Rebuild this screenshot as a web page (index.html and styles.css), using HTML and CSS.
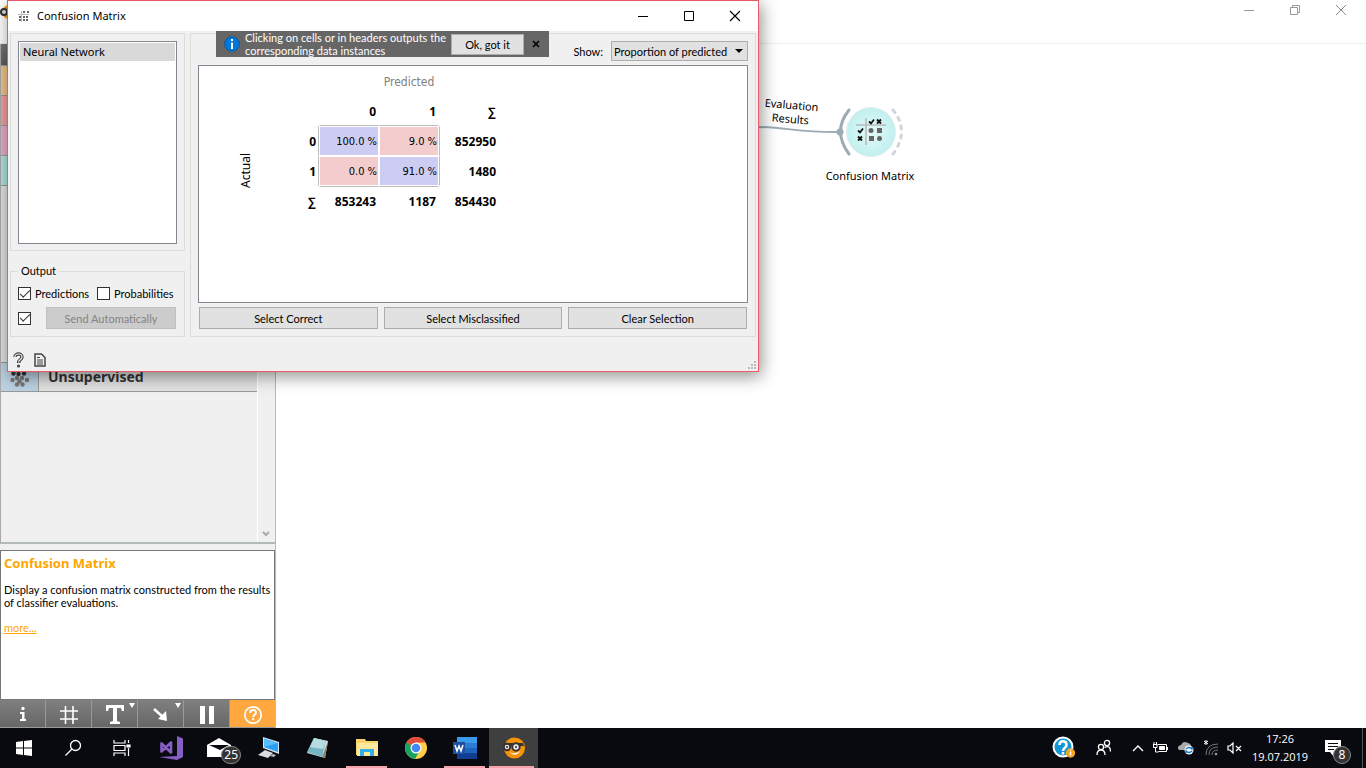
FILE: index.html
```html
<!DOCTYPE html>
<html lang="en">
<head>
<meta charset="utf-8">
<title>Confusion Matrix</title>
<link rel="stylesheet" href="styles.css">
</head>
<body>
<main class="app">
  <header class="app-bar">
    <svg class="app-logo" width="16" height="16" viewBox="0 0 16 16"><circle cx="9" cy="8" r="7" fill="#f59a14"/><circle cx="4" cy="8" r="3" fill="#ddd" stroke="#333" stroke-width="2"/></svg>
    <div class="app-controls">
      <button aria-label="Minimize"><svg width="12" height="12"><path d="M1 6.500H11" stroke="#999"/></svg></button>
      <button aria-label="Restore"><svg width="12" height="12" fill="none" stroke="#999"><path d="M1.500 3.500h7v7h-7zM3.500 3V1.500h7v7H9"/></svg></button>
      <button aria-label="Close"><svg width="12" height="12"><path d="M1 1L11 11M11 1L1 11" stroke="#888"/></svg></button>
    </div>
  </header>
  <div class="workspace">
    <aside class="sidebar">
      <div class="toolbox">
        <div class="categories">
          <div class="toolbox-head"></div>
          <div class="category data"></div>
          <div class="category visualize"></div>
          <div class="category model"></div>
          <div class="category evaluate"></div>
          <div class="category-body"></div>
          <button class="unsupervised"><span class="unsup-icon"><svg width="20" height="20" viewBox="0 0 20 20"><g fill="#333"><circle cx="6" cy="3" r="2"/><circle cx="11" cy="2" r="2"/><circle cx="16" cy="3" r="2"/><circle cx="3.500" cy="6.500" r="2.200"/><circle cx="8.500" cy="7" r="2.200"/><circle cx="14" cy="6.500" r="2.200"/></g><g fill="#777"><circle cx="7" cy="11" r="2.200"/><circle cx="12" cy="11" r="2.200"/><circle cx="2.500" cy="13" r="2.200"/><circle cx="17" cy="13" r="2.200"/><circle cx="9.500" cy="14.500" r="2.200"/><circle cx="7" cy="17.500" r="2.200"/><circle cx="12.500" cy="17.500" r="2.200"/></g></svg></span><span>Unsupervised</span></button>
          <div class="category-rest"></div>
        </div>
        <div class="scroll"><svg width="8" height="6"><path d="M1 1l3 3 3-3" fill="none" stroke="#aaa" stroke-width="2"/></svg></div>
      </div>
      <section class="help">
        <h2>Confusion Matrix</h2>
        <p>Display a confusion matrix constructed from the results of classifier evaluations.</p>
        <a href="#more">more...</a>
      </section>
      <nav class="tools">
        <button aria-label="Info"><svg width="20" height="24" viewBox="0 0 20 24" fill="#fff"><circle cx="10" cy="6.500" r="1.700"/><path d="M7 10h4.500v7H13v2H7v-2h2v-5H7z"/></svg></button>
        <button aria-label="Grid"><svg width="20" height="24" viewBox="0 0 20 24"><path d="M6.500 4v18M14 4v18M1 9h18M1 17h18" stroke="#fff" stroke-width="1.600"/></svg></button>
        <button aria-label="Text" class="has-menu"><svg width="20" height="24" viewBox="0 0 20 24" fill="#fff"><path d="M1 3h18v6h-2l-1-3h-4v13l3 1v2H5v-2l3-1V6H4L3 9H1z"/></svg></button>
        <button aria-label="Arrow" class="has-menu"><svg width="20" height="24" viewBox="0 0 20 24"><path d="M3 7l9 8" stroke="#fff" stroke-width="2.500"/><path d="M16 19l-1-10-8 8z" fill="#fff"/></svg></button>
        <button aria-label="Pause"><svg width="20" height="24" viewBox="0 0 20 24"><path d="M3 4h5v18H3zM12 4h5v18h-5z" fill="#fff"/></svg></button>
        <button aria-label="Help" class="active"><svg width="20" height="24" viewBox="0 0 20 24" fill="none" stroke="#fff" stroke-width="1.700"><circle cx="10" cy="13" r="8.200"/><path d="M7.200 11c0-4 5.800-3.800 5.800-.5 0 2-2.800 2-2.800 4.500M10.200 16v2" stroke-width="2"/></svg></button>
      </nav>
    </aside>
    <section class="canvas">
      <svg class="link" width="90" height="20" viewBox="0 0 90 20"><path d="M0 6C30 6 45 12 85 11" fill="none" stroke="#9cacb4" stroke-width="2"/></svg>
      <div class="link-label">Evaluation<br>Results</div>
      <div class="node">
        <svg width="70" height="56" viewBox="0 0 70 56">
          <defs><radialGradient id="disc"><stop offset="0" stop-color="#e2faf9"/><stop offset="1" stop-color="#c0f0ef"/></radialGradient></defs>
          <circle cx="36" cy="29" r="24.500" fill="url(#disc)" stroke="#e6eded"/>
          <path d="M14 7Q-3 28 14 51" fill="none" stroke="#9cacb4" stroke-width="3" stroke-linecap="round"/>
          <circle cx="5" cy="29" r="3.500" fill="#9cacb4"/>
          <path d="M58 7Q75 28 58 51" fill="none" stroke="#cdd6da" stroke-width="3" stroke-linecap="round" stroke-dasharray="3 6"/>
          <path d="M31 15v27M21 22h30" stroke="#bbb" stroke-width="1.600"/>
          <path d="M34 18.500l2 2 3-4M23 27.500l2 2 3-4M42 16.500l4 4M46 16.500l-4 4M23 33.500l4 4M27 33.500l-4 4" fill="none" stroke="#111" stroke-width="1.800"/>
          <g fill="#666"><circle cx="36" cy="27.500" r="2.500"/><path d="M42 25h5v5h-5zM34 33h5v5h-5z"/><circle cx="44.500" cy="35.500" r="2.500"/></g>
        </svg>
        <div>Confusion Matrix</div>
      </div>
    </section>
  </div>
</main>

<section class="dialog" role="dialog" aria-label="Confusion Matrix">
  <header class="title-bar">
    <svg width="13" height="13" viewBox="0 0 13 13"><path d="M4.500 1v11M1 4.500h11" stroke="#bbb"/><path d="M2 7h2M2 10h2M6 7h2M9 7h2M6 10h2M9 10h2M6 2h2M10 2h2" stroke="#666" stroke-width="2"/></svg>
    <h1>Confusion Matrix</h1>
    <div class="dialog-controls">
      <button aria-label="Minimize"><svg width="12" height="12"><path d="M1 6.500H11" stroke="#000"/></svg></button>
      <button aria-label="Maximize"><svg width="12" height="12"><path d="M1.500 1.500h9v9h-9z" fill="none" stroke="#000"/></svg></button>
      <button aria-label="Close"><svg width="12" height="12"><path d="M1 1L11 11M11 1L1 11" stroke="#000" stroke-width="1.200"/></svg></button>
    </div>
  </header>
  <div class="hint">
    <svg width="16" height="16" viewBox="0 0 16 16"><circle cx="8" cy="8" r="7.500" fill="#0078d7" stroke="#1c5a91"/><path d="M8 6.500V13M8 3v2" stroke="#fff" stroke-width="2"/></svg>
    <p>Clicking on cells or in headers outputs the<br>corresponding data instances</p>
    <button class="button">Ok, got it</button>
    <button class="dismiss" aria-label="Dismiss"><svg width="8" height="8"><path d="M1 1l6 6M7 1L1 7" stroke="#000" stroke-width="1.600"/></svg></button>
  </div>
  <div class="dialog-body">
    <div class="left">
      <div class="group learners"><ul><li>Neural Network</li></ul></div>
      <fieldset class="output">
        <legend>Output</legend>
        <div class="checks">
          <label><input type="checkbox" checked>Predictions</label>
          <label><input type="checkbox">Probabilities</label>
        </div>
        <div class="send"><input type="checkbox" checked aria-label="Send automatically"><button class="button" disabled>Send Automatically</button></div>
      </fieldset>
    </div>
    <div class="group right">
      <div class="show"><label for="show">Show:</label><select id="show"><option>Proportion of predicted</option></select></div>
      <div class="matrix-frame">
        <table class="matrix">
          <colgroup><col class="c-side"><col class="c-head"><col class="c-val"><col class="c-val"><col class="c-val"></colgroup>
          <tr><td></td><td></td><td colspan="3" class="predicted">Predicted</td></tr>
          <tr><td></td><td></td><th class="line-b">0</th><th class="line-b">1</th><th>∑</th></tr>
          <tr><td rowspan="3" class="actual"><span>Actual</span></td><th class="line-r">0</th><td class="hit">100.0 %</td><td class="miss">9.0 %</td><th class="line-l">852950</th></tr>
          <tr><th class="line-r">1</th><td class="miss">0.0 %</td><td class="hit">91.0 %</td><th class="line-l">1480</th></tr>
          <tr><th>∑</th><th class="line-t">853243</th><th class="line-t">1187</th><th>854430</th></tr>
        </table>
      </div>
      <div class="actions"><button class="button">Select Correct</button><button class="button">Select Misclassified</button><button class="button">Clear Selection</button></div>
    </div>
  </div>
  <footer class="status">
    <button aria-label="Help"><svg width="12" height="16" viewBox="0 0 12 16" fill="none"><path d="M3 5c0-4 7-4 7 0 0 2.500-3.500 2.500-3.500 6" stroke="#444" stroke-width="3.400"/><path d="M3 5c0-4 7-4 7 0 0 2.500-3.500 2.500-3.500 5.500" stroke="#eee" stroke-width="1.200"/><circle cx="6.500" cy="14" r="1.600" fill="#444"/></svg></button>
    <button aria-label="Report"><svg width="12" height="14" viewBox="0 0 12 14" fill="none" stroke="#444"><path d="M1 1h6.500L11 4.500V13H1z" stroke-width="1.500"/><path d="M3 4.500h3M3 7h6M3 9h6M3 11h6"/></svg></button>
    <svg class="grip" width="8" height="8"><path d="M6 0h2v2H6zM3 3h2v2H3zM6 3h2v2H6zM0 6h2v2H0zM3 6h2v2H3zM6 6h2v2H6z" fill="#bbb"/></svg>
  </footer>
</section>

<footer class="taskbar">
  <div class="tasks">
    <button aria-label="Start"><svg width="16" height="16"><path d="M0 2l7-1v6.500H0zM8 1l8-1v7.500H8zM0 8.500h7V15l-7-1zM8 8.500h8V16l-8-1z" fill="#fff"/></svg></button>
    <button aria-label="Search"><svg width="18" height="18"><circle cx="11.500" cy="6.500" r="5" fill="none" stroke="#fff" stroke-width="1.300"/><path d="M8 10l-6.500 6.500" stroke="#fff" stroke-width="1.300"/></svg></button>
    <button aria-label="Task view"><svg width="18" height="16" fill="none" stroke="#fff" stroke-width="1.200"><path d="M1 0v3h11V0M1 5.500h11v5H1zM1 16v-3h11v3M15.500 0v3M15.500 8v8"/><path d="M14 5h3v2h-3z" fill="#fff"/></svg></button>
    <button aria-label="Visual Studio"><svg width="24" height="24" viewBox="0 0 24 24"><path d="M18 0l6 2.500V21l-6 3-18-3 18-1z" fill="#865fc5"/><path d="M2.500 7.500v8L12 6.500v10z" fill="none" stroke="#865fc5" stroke-width="2.600" stroke-linejoin="round"/></svg></button>
    <button class="mail" aria-label="Mail"><svg width="26" height="20" viewBox="0 0 26 20"><path d="M0 7L12 0l12 7v12H0z" fill="#fff"/><path d="M2 7h20l-9 5z" fill="#080a0f"/></svg><span class="count">25</span></button>
    <button aria-label="Computer"><svg width="22" height="22" viewBox="0 0 22 22"><path d="M5 0l16 5v12L5 11z" fill="#d3e5f0"/><path d="M6 1.500l14 4.500v9L6 10z" fill="#2c9ff0"/><path d="M6 1.500l14 4.500-14 4z" fill="#58bdff"/><path d="M0 18l7-5 8 3-5 5z" fill="#d9dde1"/><path d="M12 19l3-2 3 1-2 2z" fill="#bbb"/></svg></button>
    <button aria-label="Notepad"><svg width="22" height="22" viewBox="0 0 22 22"><path d="M7 1l14 3-3 17L0 16z" fill="#d9e4e5"/><path d="M7 1l12 3-4 16L0 15z" fill="#75b4c2"/><path d="M7 1l12 3-3 8L3 10z" fill="#b6dce2"/><path d="M21 4l-3 17-3-1z" fill="#8b8270"/></svg></button>
    <button class="open" aria-label="File Explorer"><svg width="22" height="20" viewBox="0 0 22 20"><path d="M0 1h9l1 2h12v14H0z" fill="#f8d368"/><path d="M1 5h21v13H1z" fill="#ffe79b"/><path d="M4 18v-7h14v7h-4v-4H8v4z" fill="#32aee8"/></svg></button>
    <button aria-label="Chrome"><svg width="24" height="24" viewBox="0 0 24 24"><circle cx="12" cy="12" r="11" fill="#ffcd46"/><path d="M12 12L2.500 6.500A11 11 0 0 1 21.500 6.500H12z" fill="#e14b3e"/><path d="M12 12L2.500 6.500A11 11 0 0 0 11 23l5-9z" fill="#19a260"/><circle cx="12" cy="12" r="5.500" fill="#fff"/><circle cx="12" cy="12" r="4.300" fill="#4688f1"/></svg></button>
    <button class="open" aria-label="Word"><svg width="24" height="22" viewBox="0 0 24 22"><path d="M4 0h20v6H4z" fill="#3a9aeb"/><path d="M4 6h20v5H4z" fill="#2b7cd3"/><path d="M4 11h20v5H4z" fill="#1e63bd"/><path d="M4 16h20v6H4z" fill="#103f91"/><path d="M0 5h12v12H0z" fill="#1c4f9f"/><path d="M2 8l2 6 2-5 2 5 2-6" fill="none" stroke="#fff" stroke-width="1.500"/></svg></button>
    <button class="open current" aria-label="Orange"><svg width="22" height="22" viewBox="0 0 22 22"><circle cx="11.500" cy="11" r="10.500" fill="#f59208"/><path d="M0 6h20l1 3H1z" fill="#39322e"/><g fill="#eee" stroke="#39322e" stroke-width="2"><circle cx="4" cy="10" r="3.200"/><circle cx="13" cy="10" r="3.700"/></g><circle cx="4" cy="10" r="1" fill="#222"/><circle cx="13" cy="10" r="1" fill="#222"/><path d="M6 15q6 3 11-1-4 7-11 1" fill="#fff"/></svg></button>
  </div>
  <div class="tray">
    <svg width="24" height="24" viewBox="0 0 24 24"><circle cx="11" cy="11" r="9.500" fill="#1495d5" stroke="#fff" stroke-width="2"/><path d="M7.500 9c0-5 7-5 7 0 0 3-3.500 2.500-3.500 6M11 16v2.500" fill="none" stroke="#fff" stroke-width="2.500"/><circle cx="18.500" cy="17" r="4.700" fill="#f3a51f"/><path d="M18.500 15.500v4M18.500 13.500v1" stroke="#fff" stroke-width="1.500"/></svg>
    <svg class="people" width="16" height="18" viewBox="0 0 16 18" fill="none" stroke="#fff" stroke-width="1.300"><circle cx="5" cy="8" r="2.600"/><path d="M1 16q0-5 4-5t4 5"/><circle cx="11" cy="4" r="2.600"/><path d="M8.500 8.500q6-3 6 4"/></svg>
    <svg width="12" height="8"><path d="M1 7l5-5 5 5" fill="none" stroke="#fff" stroke-width="1.400"/></svg>
    <svg width="17" height="12" viewBox="0 0 17 12" fill="none" stroke="#fff"><path d="M5.500 2.500h9v7h-8M15.500 5v3M1 2.500h4v3H1.500v-3M2 0v2M4.500 0v2M3.500 6v4h3"/><path d="M7.500 4.500h5v3h-5z" fill="#fff"/></svg>
    <svg width="18" height="14" viewBox="0 0 18 14"><path d="M2 9q-3-4 2-5 2-5 7-2 4 1 3 7z" fill="#aaa"/><circle cx="12" cy="9" r="4.500" fill="#f4f8fb"/><path d="M9 8q3-3 6 0V6M15 10q-3 3-6 0v2" fill="none" stroke="#1474c4" stroke-width="1.300"/></svg>
    <svg width="16" height="16" viewBox="0 0 16 16" fill="none" stroke="#777"><path d="M3 15Q3 4 15 4M6 15Q6 7 15 7M9 15Q9 10 15 10"/><circle cx="13" cy="14" r="1.300" fill="#999" stroke="none"/><path d="M3 0v5M1 1l4 3M5 1L1 4" stroke="#fff"/></svg>
    <svg width="16" height="12" viewBox="0 0 16 12" fill="none" stroke="#fff" stroke-width="1.200"><path d="M1 4h2l3-3v10L3 8H1zM9 4l5 5M14 4L9 9"/></svg>
    <time class="clock">17:26<br>19.07.2019</time>
    <div class="notice"><svg width="16" height="17"><path d="M0 0h16v12H9v5l-4-5H0z" fill="#fff"/><path d="M3 3.500h10M3 6.500h10M3 9.500h6" stroke="#080a0f"/></svg><span class="count">8</span></div>
    <div class="desktop-edge"></div>
  </div>
</footer>
</body>
</html>
```
FILE: styles.css
```css
* { box-sizing: border-box; }
body {
  margin: 0;
  height: 100vh;
  display: flex;
  flex-direction: column;
  overflow: hidden;
  background: #fff;
  color: #000;
  font: 11px/13px Lato, sans-serif;
}
svg { display: block; flex: none; }
button { font: inherit; color: inherit; padding: 0; border: 0; background: none; }
h1, h2, p, ul { margin: 0; padding: 0; font-weight: normal; }

/* Main window */
.app { flex: 1; display: flex; flex-direction: column; min-height: 0; }
.app-bar { height: 44px; display: flex; justify-content: space-between; border-bottom: 1px solid #eee; }
.app-logo { margin-top: 4px; }
.app-controls { display: flex; height: 20px; }
.app-controls button { width: 46px; display: grid; place-items: center; }
.workspace { flex: 1; display: flex; min-height: 0; }
.app-controls { padding-right: 2px; }
.sidebar { width: 276px; display: flex; flex-direction: column; background: #f0f0f0; border-right: 1px solid #b4b9ba; }
.toolbox { flex: 1; display: flex; border-bottom: 2px solid #b4b9ba; border-left: 1px solid #aaa; }
.categories { flex: 1; display: flex; flex-direction: column; }
.toolbox-head { height: 22px; background: linear-gradient(#777, #5e5e5e); border-bottom: 1px solid #999; }
.category { height: 30px; border-bottom: 1px solid #999; }
.data { background: #f0c48a; }
.visualize { background: #f0a0a0; }
.model { background: #e8accc; }
.evaluate { background: #b0e4e0; }
.category-body { height: 176px; background: #e3e3e3; }
.unsupervised { height: 30px; display: flex; align-items: center; gap: 9px; background: #e1e1e1; border-top: 1px solid #999; border-bottom: 1px solid #999; font: bold 14px/20px "Noto Sans", sans-serif; color: #333; }
.unsup-icon { width: 38px; height: 28px; display: grid; place-items: center; background: #bbd2e2; border-right: 1px solid #999; }
.category-rest { flex: 1; }
.scroll { width: 18px; display: flex; align-items: flex-end; justify-content: center; padding: 0 1px 5px 0; border-left: 1px solid #fff; }
.help { height: 150px; margin-top: 6px; padding: 5px 3px; background: #fff; border: 1px solid #777; line-height: 13px; }
.help h2 { color: #ffa500; font: bold 13px/15px "Noto Sans", sans-serif; margin-bottom: 12px; }
.help p { margin-bottom: 12px; }
.help a { color: #ffa500; }
.tools { height: 28px; display: flex; background: linear-gradient(#808080, #666); border-bottom: 1px solid #999; }
.tools button { flex: 1; position: relative; display: grid; place-items: center; border-right: 1px solid #999; }
.tools .active { background: #ffa840; border-right: 0; }
.has-menu::after { content: ""; position: absolute; top: 3px; right: 2px; border: 3px solid transparent; border-top: 5px solid #fff; border-bottom: 0; }

/* Canvas */
.canvas { flex: 1; position: relative; background: #fff; font-family: "Noto Sans", sans-serif; }
.link { position: absolute; left: 480px; top: 77px; }
.link-label { position: absolute; left: 485px; top: 54px; width: 60px; line-height: 14px; text-align: center; transform: rotate(5deg); }
.node { position: absolute; left: 544px; top: 59px; width: 100px; display: grid; justify-items: center; gap: 10px; }

/* Dialog */
.dialog { position: absolute; left: 7px; top: 0; width: 752px; background: #f0f0f0; border: 1px solid #e85c68; box-shadow: 2px 4px 16px rgba(0, 0, 0, .45); }
.title-bar { height: 30px; display: flex; align-items: center; gap: 7px; padding-left: 9px; background: #fff; }
.title-bar h1 { flex: 1; font: 11px/16px "Noto Sans", sans-serif; }
.dialog-controls { display: flex; height: 30px; }
.dialog-controls button { width: 46px; display: grid; place-items: center; }
.button { height: 22px; background: #e1e1e1; border: 1px solid #adadad; }
.button:disabled { background: #ccc; border-color: #bfbfbf; color: #838383; }
.hint { position: absolute; left: 208px; top: 30px; width: 333px; height: 26px; display: flex; align-items: center; gap: 5px; padding-left: 8px; background: #666; color: #fff; }
.hint p { flex: 1; white-space: nowrap; }
.hint .button { width: 73px; height: 21px; color: #000; }
.dismiss { width: 20px; display: grid; place-items: center start; padding-left: 3px; }
.dialog-body { display: flex; gap: 5px; padding: 2px 2px 0; }
.left { width: 175px; display: flex; flex-direction: column; gap: 13px; }
.group, .output { border: 1px solid #dcdcdc; }
.learners { flex: 1; padding: 7px 7px 6px; display: flex; }
.learners ul { flex: 1; list-style: none; padding: 1px; background: #fff; border: 1px solid #828790; }
.learners li { height: 18px; padding-left: 3px; font: 11px/18px "Noto Sans", sans-serif; background: #d9d9d9; }
.output { margin: 0; padding: 9px 8px 7px 7px; min-width: 0; }
.output legend { padding: 0 3px; line-height: 14px; }
.checks { display: flex; gap: 8px; margin-bottom: 7px; }
.checks label { display: flex; align-items: center; gap: 4px; white-space: nowrap; }
input[type="checkbox"] { appearance: none; flex: none; width: 13px; height: 13px; margin: 0; background: #fff; border: 1px solid #333; display: grid; place-items: center; }
input:checked::before { content: ""; width: 9px; height: 4px; margin-top: -3px; border: solid #333; border-width: 0 0 1px 1px; transform: rotate(-45deg); }
.send { display: flex; align-items: center; gap: 15px; }
.send .button { flex: 1; }
.right { flex: 1; padding: 7px; }
.show { position: relative; display: flex; justify-content: flex-end; align-items: center; gap: 8px; margin-bottom: 4px; }
.show select { width: 137px; height: 20px; padding: 0 2px; font: inherit; color: #000; border: 1px solid #adadad; border-radius: 0; appearance: none; background: #e1e1e1; }
.show::after { content: ""; position: absolute; right: 5px; top: 8px; border: 4px solid transparent; border-top-color: #000; border-bottom: 0; pointer-events: none; }
.matrix-frame { height: 238px; background: #fff; border: 1px solid #828790; }
.matrix { table-layout: fixed; width: 300px; border-collapse: separate; border-spacing: 0; font: 12px/14px "Noto Sans", sans-serif; }
.c-side { width: 94px; }
.c-head { width: 26px; }
.c-val { width: 60px; }
.matrix td, .matrix th { height: 30px; padding: 2px 2px 0; text-align: right; border: 1px solid #fff; }
.matrix .predicted { text-align: center; color: #808080; font-family: "DejaVu Sans Condensed", sans-serif; }
.matrix .actual { padding-top: 0; text-align: center; }
.actual span { display: inline-block; writing-mode: vertical-rl; transform: rotate(180deg); vertical-align: middle; }
.matrix .hit, .matrix .miss { padding-right: 1px; font-family: "DejaVu Sans Condensed", sans-serif; font-size: 11px; background-clip: padding-box; }
.matrix .hit { background-color: #cdcdf3; }
.matrix .miss { background-color: #f3cdcd; }
.matrix .line-b { border-bottom-color: #bbb; }
.matrix .line-r { border-right-color: #bbb; }
.matrix .line-l { border-left-color: #bbb; }
.matrix .line-t { border-top-color: #bbb; }
.actions { display: flex; gap: 6px; padding: 4px 1px 0; }
.actions .button { flex: 1; }
.status { height: 34px; display: flex; align-items: center; gap: 10px; padding: 12px 2px 0 4px; }
.grip { margin-left: auto; align-self: flex-end; margin-bottom: 2px; }

/* Taskbar */
.taskbar { height: 40px; display: flex; justify-content: space-between; background: #080a0f; color: #fff; }
.tasks { display: flex; }
.tasks button { width: 49px; display: grid; place-items: center; position: relative; }
.tasks button:first-child { width: 48px; }
.tasks .open::after { content: ""; position: absolute; left: 4px; right: 4px; bottom: 0; height: 2px; background: #f6a3ae; }
.tasks .current { background: #3f3f3f; }
.tasks .current::after { left: 0; }
.count { position: absolute; right: 3px; bottom: 4px; min-width: 18px; height: 18px; padding: 0 2px; border: 1px solid #888; border-radius: 9px; background: #333; color: #fff; font: 12px/16px "Noto Sans", sans-serif; text-align: center; }
.tray { display: flex; align-items: center; gap: 8px; }
.people { margin: 0 12px; }
.clock { width: 56px; margin: 0 4px 0 1px; font: 11px/18px "Open Sans", sans-serif; text-align: center; }
.notice { position: relative; width: 34px; height: 40px; padding: 12px 0 0 5px; }
.desktop-edge { width: 4px; height: 40px; border-left: 1px solid #555; }
```
